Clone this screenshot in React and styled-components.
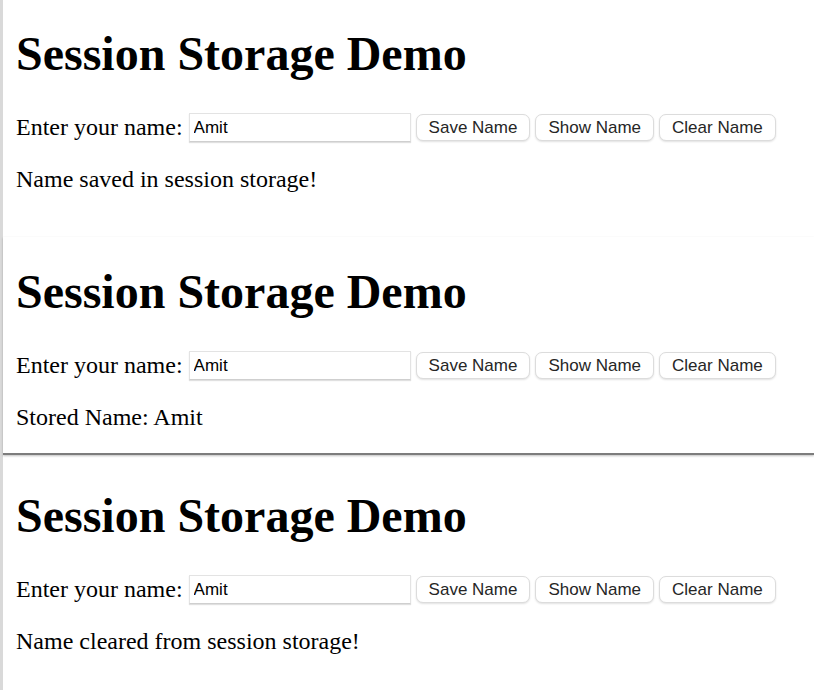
import React from "react";
import styled, { createGlobalStyle } from "styled-components";

const GlobalStyle = createGlobalStyle`
  html, body {
    margin: 0;
    padding: 0;
    background: #ffffff;
  }
  body {
    font-family: "Liberation Serif", "Times New Roman", serif;
    color: #000;
  }
`;

const Page = styled.div`
  display: flex;
  flex-direction: column;
  min-height: 100vh;
  border-left: 3px solid #d9d9d9;
  box-sizing: border-box;
`;

const Panel = styled.section`
  display: flex;
  flex-direction: column;
  align-items: flex-start;
  padding: ${(p) => p.$top}px 0 ${(p) => p.$bottom || 0}px 13px;
  border-bottom: ${(p) => (p.$divider ? "2px solid #7d7d7d" : "none")};
  box-shadow: ${(p) => (p.$divider ? "0 1px 2px rgba(0,0,0,0.25)" : "none")};
`;

const Title = styled.h1`
  margin: 0;
  font-family: "Liberation Serif", "Times New Roman", serif;
  font-size: 48px;
  line-height: 56px;
  font-weight: 700;
  color: #000;
`;

const Form = styled.div`
  display: flex;
  align-items: center;
  margin-top: 31px;
  height: 29px;
`;

const Label = styled.label`
  font-size: 24px;
  line-height: 29px;
  margin-right: 6px;
`;

const NameInput = styled.input`
  box-sizing: border-box;
  width: 222px;
  height: 29px;
  margin: 0 5px 0 0;
  padding: 0 4px;
  border: 1px solid #e3e3e3;
  border-bottom-color: #cfcfcf;
  border-radius: 0;
  box-shadow: 0 1px 1px rgba(0, 0, 0, 0.12);
  font-family: "Liberation Sans", Arial, sans-serif;
  font-size: 17px;
  color: #000;
  background: #fff;
  outline: none;
`;

const Button = styled.button`
  box-sizing: border-box;
  height: 27px;
  margin-left: ${(p) => (p.$first ? 0 : 5)}px;
  padding: 0 12px;
  border: 1px solid #dcdcdc;
  border-radius: 7px;
  background: #fff;
  box-shadow: 0 1px 2px rgba(0, 0, 0, 0.12);
  font-family: "Liberation Sans", Arial, sans-serif;
  font-size: 17px;
  line-height: 25px;
  color: #262626;
  cursor: pointer;
`;

const Message = styled.p`
  margin: 23px 0 0;
  font-size: 24px;
  line-height: 28px;
`;

const sections = [
  { top: 26, bottom: 44, msg: "Name saved in session storage!" },
  { top: 27, bottom: 22, msg: "Stored Name: Amit", divider: true },
  { top: 33, bottom: 0, msg: "Name cleared from session storage!" },
];

function Demo({ top, bottom, divider, msg }) {
  return (
    <Panel $top={top} $bottom={bottom} $divider={divider}>
      <Title>Session Storage Demo</Title>
      <Form>
        <Label>Enter your name:</Label>
        <NameInput type="text" defaultValue="Amit" />
        <Button $first>Save Name</Button>
        <Button>Show Name</Button>
        <Button>Clear Name</Button>
      </Form>
      <Message>{msg}</Message>
    </Panel>
  );
}

export default function App() {
  return (
    <>
      <GlobalStyle />
      <Page>
        {sections.map((s, i) => (
          <Demo key={i} {...s} />
        ))}
      </Page>
    </>
  );
}
